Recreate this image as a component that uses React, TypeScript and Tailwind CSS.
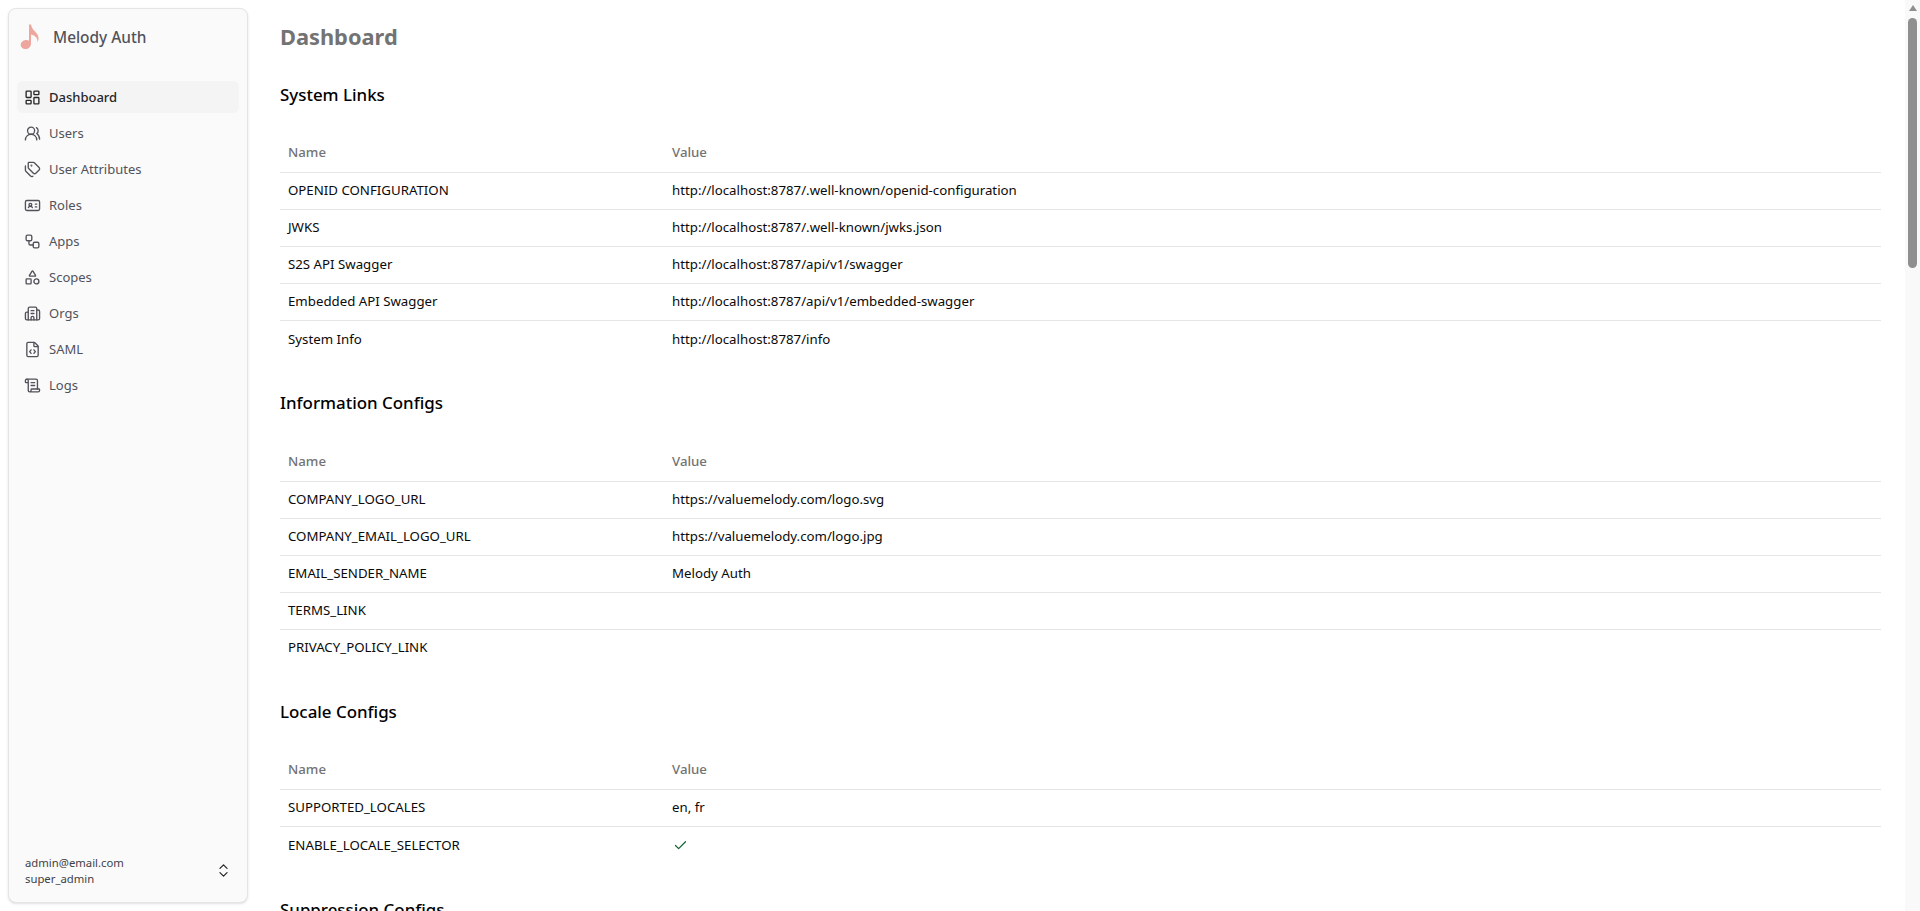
import { LayoutDashboard, UsersRound, Tags, IdCard, Workflow, Shapes, Building2, FileCode, ScrollText, ChevronsUpDown, Check } from "lucide-react";

const nav = [
  { label: "Dashboard", Icon: LayoutDashboard, active: true },
  { label: "Users", Icon: UsersRound },
  { label: "User Attributes", Icon: Tags },
  { label: "Roles", Icon: IdCard },
  { label: "Apps", Icon: Workflow },
  { label: "Scopes", Icon: Shapes },
  { label: "Orgs", Icon: Building2 },
  { label: "SAML", Icon: FileCode },
  { label: "Logs", Icon: ScrollText },
];

const sections: { title: string; rows: [string, React.ReactNode][] }[] = [
  {
    title: "System Links",
    rows: [
      ["OPENID CONFIGURATION", "http://localhost:8787/.well-known/openid-configuration"],
      ["JWKS", "http://localhost:8787/.well-known/jwks.json"],
      ["S2S API Swagger", "http://localhost:8787/api/v1/swagger"],
      ["Embedded API Swagger", "http://localhost:8787/api/v1/embedded-swagger"],
      ["System Info", "http://localhost:8787/info"],
    ],
  },
  {
    title: "Information Configs",
    rows: [
      ["COMPANY_LOGO_URL", "https://valuemelody.com/logo.svg"],
      ["COMPANY_EMAIL_LOGO_URL", "https://valuemelody.com/logo.jpg"],
      ["EMAIL_SENDER_NAME", "Melody Auth"],
      ["TERMS_LINK", ""],
      ["PRIVACY_POLICY_LINK", ""],
    ],
  },
  {
    title: "Locale Configs",
    rows: [
      ["SUPPORTED_LOCALES", "en, fr"],
      ["ENABLE_LOCALE_SELECTOR", <Check key="c" className="ml-px size-[15px] text-[#166534]" strokeWidth={2} />],
    ],
  },
];

function Section({ title, rows }: { title: string; rows: [string, React.ReactNode][] }) {
  return (
    <section className="mb-[30.5px]">
      <h2 className="flex h-[28px] items-center pt-px text-[16.9px] font-medium leading-[28px] text-black">{title}</h2>
      <div className="mt-[24px]">
        <div className="flex h-[41px] items-center border-b border-[#e5e5e5] pt-[2px] text-[13.25px] font-medium text-[#737373]">
          <div className="w-[384px] pl-2">Name</div>
          <div className="pl-2">Value</div>
        </div>
        {rows.map(([name, value], i) => (
          <div
            key={name}
            className={`flex h-[37px] items-center text-[13.25px] text-[#0a0a0a] ${i < rows.length - 1 ? "border-b border-[#e5e5e5]" : ""}`}
          >
            <div className="w-[384px] pl-2">{name}</div>
            <div className="pl-2">{value}</div>
          </div>
        ))}
      </div>
    </section>
  );
}

export default function App() {
  return (
    <div className="flex h-[911px] w-[1920px] overflow-hidden bg-white font-['Noto_Sans','Open_Sans',sans-serif]">
      <aside className="m-2 flex w-[240px] shrink-0 flex-col rounded-lg border border-[#e5e5e5] bg-[#fafafa] shadow-sm">
        <div className="flex h-[56px] items-center gap-[13px] pl-[11px]">
          <svg width="20" height="26" viewBox="0 0 20 26" className="shrink-0">
            <path d="M9 0.5 L11 0.5 C11.5 4 13.5 6 15.5 8 C18.5 11 19.5 14.5 17.5 18 C17.8 14.5 15.5 11.5 11 10.5 L11 19.5 C11 23 8.5 25 5.5 25 C2.5 25 0.7 23.2 0.7 21 C0.7 18.2 3.3 16 6.3 16 C7.5 16 8.4 16.3 9 16.7 Z" fill="#eda79f" />
          </svg>
          <span className="pt-[2px] text-[15.4px] font-medium text-[#52525b]">Melody Auth</span>
        </div>
        <nav className="mt-4 flex flex-col gap-1 px-2">
          {nav.map(({ label, Icon, active }) => (
            <div
              key={label}
              className={`flex h-8 items-center gap-[8px] rounded-md pl-[7px] text-[13px] ${active ? "bg-[#f4f4f5] font-medium text-[#27272a]" : "text-[#52525b]"}`}
            >
              <Icon className="size-[17px] shrink-0" strokeWidth={1.9} />
              <span className="pt-px">{label}</span>
            </div>
          ))}
        </nav>
        <div className="mt-auto flex items-center justify-between pb-[15px] pl-4 pr-[15px]">
          <div className="text-[11.3px] leading-4 text-[#3f3f46]">
            <div>admin@email.com</div>
            <div>super_admin</div>
          </div>
          <ChevronsUpDown className="-mt-[2px] size-[17px] text-[#27272a]" strokeWidth={1.75} />
        </div>
      </aside>
      <main className="min-w-0 flex-1 overflow-hidden pl-6 pr-6 pt-[21px]">
        <h1 className="mb-[27px] text-[21.8px] font-bold leading-8 text-[#737373]">Dashboard</h1>
        {sections.map((s) => (
          <Section key={s.title} {...s} />
        ))}
        <h2 className="pt-px text-[16.9px] font-medium leading-[28px] text-black">Suppression Configs</h2>
      </main>
      <div className="flex w-[15px] shrink-0 flex-col items-center bg-[#f9f9f9]">
        <div className="mt-[5px] h-0 w-0 border-x-[4.5px] border-b-[6px] border-x-transparent border-b-[#8f8f8f]" />
        <div className="mt-[7px] h-[250px] w-[9px] rounded-full bg-[#8f8f8f]" />
      </div>
    </div>
  );
}
